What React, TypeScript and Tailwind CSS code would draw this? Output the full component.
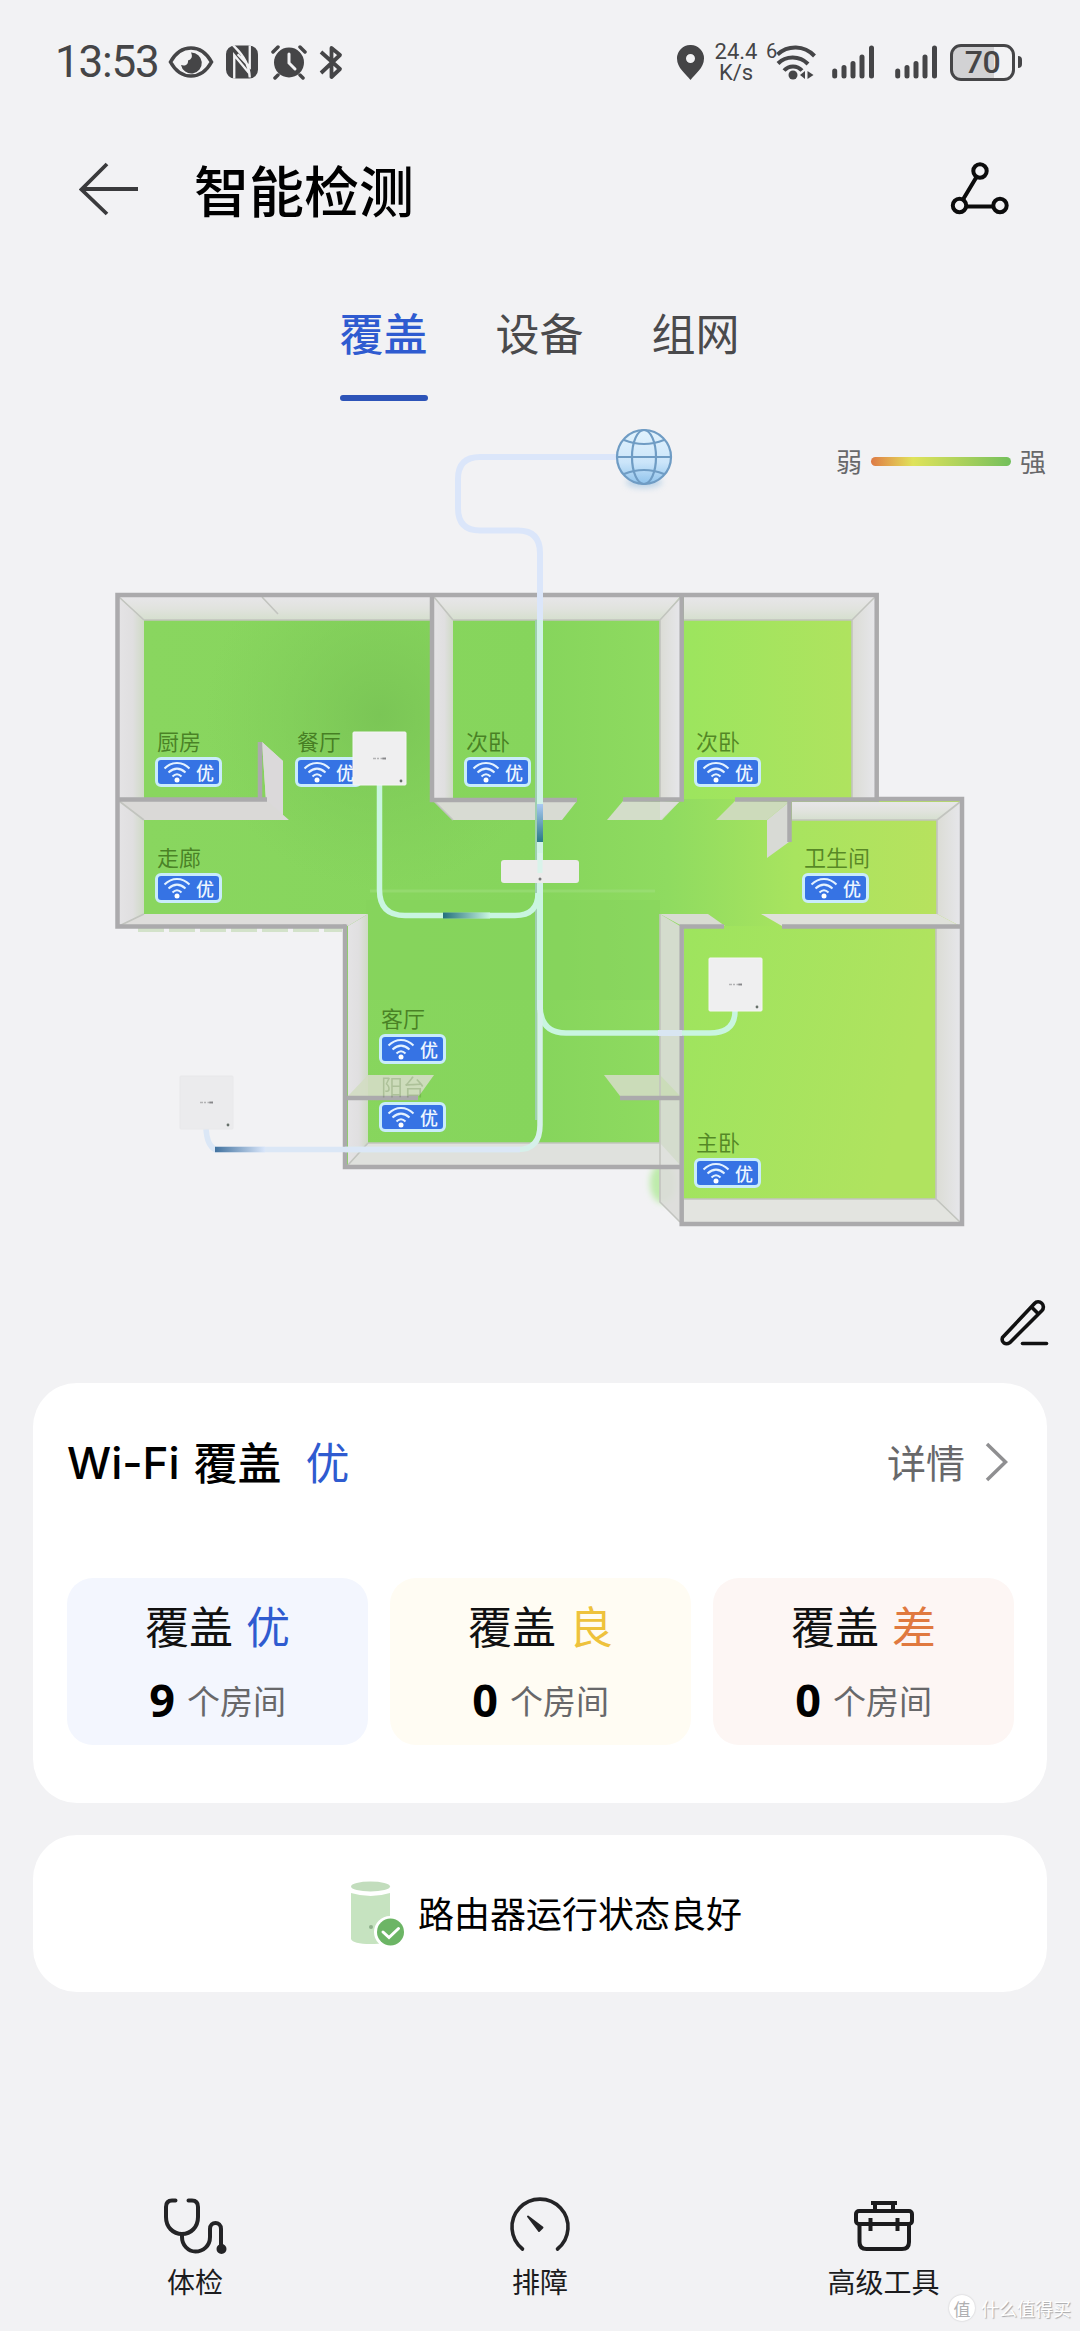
import React from 'react';

interface Room {
  id: string;
  name: string;
  position: string;
  nameClass?: string;
}

interface CoverageLevel {
  grade: string;
  count: number;
  card: string;
  text: string;
}

const rooms: Room[] = [
  { id: 'kitchen', name: '厨房', position: 'left-[155px] top-[314px]' },
  { id: 'dining', name: '餐厅', position: 'left-[295px] top-[314px]' },
  { id: 'bedroom-1', name: '次卧', position: 'left-[464px] top-[314px]' },
  { id: 'bedroom-2', name: '次卧', position: 'left-[694px] top-[314px]' },
  { id: 'corridor', name: '走廊', position: 'left-[155px] top-[430px]' },
  { id: 'bathroom', name: '卫生间', position: 'left-[802px] top-[430px]' },
  { id: 'living', name: '客厅', position: 'left-[379px] top-[591px]' },
  { id: 'balcony', name: '阳台', position: 'left-[379px] top-[659px]', nameClass: 'opacity-30' },
  { id: 'master', name: '主卧', position: 'left-[694px] top-[715px]' },
];

const levels: CoverageLevel[] = [
  { grade: '优', count: 9, card: 'bg-[#f3f6fe]', text: 'text-[#2f5bd0]' },
  { grade: '良', count: 0, card: 'bg-[#fffcf3]', text: 'text-[#eec23c]' },
  { grade: '差', count: 0, card: 'bg-[#fdf6f4]', text: 'text-[#e0793f]' },
];

const SignalBars = () => (
  <svg className="w-[43px] h-[34px]" viewBox="0 0 43 34" stroke="#454547" strokeWidth={5} strokeLinecap="round">
    <path d="M2.7 26v5M12 22.500v8.500M21 18.500v12.500M30 12v19M39.500 3v28" />
  </svg>
);

const StatusBar = () => (
  <div className="flex items-center h-[124px] pl-[55px] pr-[58px] text-[#454547] font-['Roboto',sans-serif]">
    <span className="w-[113px] text-[44px] leading-none tracking-[-1.2px]">13:53</span>
    <svg className="w-[46px] h-[34px]" viewBox="0 0 46 34" fill="none">
      <path d="M2.500 17C8 7 15 3 23 3s15 4 20.500 14C38 27 31 31 23 31S8 27 2.500 17z" stroke="#454547" strokeWidth={3.600} />
      <path d="M23 7.500a10.500 10.500 0 1 1-10 12.500c4 1.500 7.500-.5 7-4.500 3.500-1 5-4 3-8z" fill="#454547" />
    </svg>
    <svg className="w-[32px] h-[34px] ml-[12px]" viewBox="0 0 33 34">
      <rect width="33" height="34" rx="9" fill="#454547" />
      <path d="M7.500 0C9 2 24 13 24.500 33M8.500 34V10l15 18M24.500 0v22L12 9" fill="none" stroke="#f2f2f4" strokeWidth={2.400} />
    </svg>
    <svg className="w-[36px] h-[36px] ml-[13px]" viewBox="0 0 36 36" fill="none" strokeLinecap="round">
      <circle cx="18" cy="18.500" r="15" fill="#454547" />
      <path d="M2 8l5-5M34 8l-5-5M7 31l-3 3M29 31l3 3" stroke="#454547" strokeWidth={3.500} />
      <path d="M18 10v9l6 6" stroke="#f2f2f4" strokeWidth={3} />
    </svg>
    <svg className="w-[24px] h-[35px] ml-[12px]" viewBox="0 0 24 35" fill="none" stroke="#454547" strokeWidth={3.800}>
      <path d="M2 7l19 17-8.500 8V3L21 10 2 28" strokeLinejoin="round" />
    </svg>

    <div className="flex items-center ml-auto">
      <svg className="w-[27px] h-[35px]" viewBox="0 0 27 35">
        <path fillRule="evenodd" fill="#454547" d="M13.500 0A13.300 13.300 0 0 1 27 13.500C27 23 18 29 13.500 35 9 29 0 23 0 13.500A13.300 13.300 0 0 1 13.500 0zm0 9a4.500 4.500 0 1 0 0 9 4.500 4.500 0 0 0 0-9z" />
      </svg>
      <div className="w-[44px] ml-[10px] text-center text-[22px] leading-[21px]">
        <div>24.4</div>
        <div>K/s</div>
      </div>
      <span className="self-start ml-[8px] text-[20px] leading-[20px] w-[11px]">6</span>
      <svg className="w-[40px] h-[35px] -ml-[1px]" viewBox="0 0 40 35" fill="none" stroke="#454547" strokeWidth={4}>
        <path d="M1.500 9.500C12 0 28 0 38.500 11M2 18.500c8-8 21.500-8 30 .5M8 25.500c5-5.500 13-5.500 18 0" />
        <circle cx="17" cy="30" r="4.500" fill="#454547" stroke="none" />
        <path d="M29 26v8l-5-4zM31.500 26v8l6-4z" fill="#454547" stroke="none" />
      </svg>
      <div className="flex gap-[20px] ml-[16px]">
        <SignalBars />
        <SignalBars />
      </div>
      <div className="relative flex items-center justify-center w-[65px] h-[37px] ml-[12px] rounded-[11px] border-[3px] border-[#454547] bg-linear-to-r from-[#d2d2d4] from-70% to-[#f2f2f4] to-70%">
        <span className="text-[32px] leading-none font-medium tracking-[-0.5px]">70</span>
      </div>
      <span className="w-[4px] h-[12px] ml-[3px] rounded-r bg-[#454547]" />
    </div>
  </div>
);

const Header = () => (
  <header className="flex items-center h-[130px] mb-[2px] pl-[79px] pr-[70px]">
    <svg className="w-[60px] h-[54px]" viewBox="0 0 60 54" fill="none" stroke="#3a3a3c" strokeWidth={3.800}>
      <path d="M59 27H3M28 2L2.500 27.500 28 52" />
    </svg>
    <h1 className="ml-[55px] pb-[2px] text-[55px] leading-none font-medium text-black">智能检测</h1>
    <svg className="w-[60px] h-[54px] ml-auto" viewBox="0 0 60 54" fill="none" stroke="#0c0c0c" strokeWidth={4}>
      <circle cx="30" cy="9" r="6.700" />
      <circle cx="9.500" cy="43.500" r="6.700" />
      <circle cx="50" cy="43.500" r="6.700" />
      <path d="M26.500 15L13 37.500M16.500 44.500H43" />
    </svg>
  </header>
);

const Tabs = () => (
  <nav className="flex justify-center gap-[68px] h-[154px] pt-[47px] pr-[1px] text-[44px] leading-[58px] text-[#4a4a4c]">
    <div className="flex flex-col items-center text-[#2f5bd0] font-medium">
      覆盖
      <span className="w-[88px] h-[6px] mt-[34px] rounded-full bg-[#2d54b8]" />
    </div>
    <div>设备</div>
    <div>组网</div>
  </nav>
);

const AccessPoint = ({ x, y, faded }: { x: number; y: number; faded?: boolean }) => (
  <g transform={`translate(${x} ${y})`}>
    <rect width="53" height="53" rx="1" fill={faded ? '#ebebed' : '#efeff0'} stroke={faded ? '#e8e8ea' : '#f5f5f5'} />
    <path d="M20 26.500h13" stroke="#b3b3b5" strokeWidth={1.600} strokeDasharray="3 1 2 1.500" />
    <path d="M29.500 26.500h3.500" stroke="#87878a" strokeWidth={1.800} />
    <circle cx="48" cy="49" r="1.400" fill="#66706a" />
  </g>
);

const FloorPlan = () => (
  <svg className="absolute inset-0 w-full h-full" viewBox="0 410 1080 973" fill="none">
    <defs>
      <linearGradient id="hall" gradientUnits="userSpaceOnUse" x1="144" y1="0" x2="937" y2="0">
        <stop offset="0" stopColor="#89d65f" />
        <stop offset="0.5" stopColor="#86d55c" />
        <stop offset="0.66" stopColor="#8fdb60" />
        <stop offset="0.82" stopColor="#a8e45f" />
        <stop offset="1" stopColor="#b7e25e" />
      </linearGradient>
      <linearGradient id="east" gradientUnits="userSpaceOnUse" x1="684" y1="900" x2="937" y2="960">
        <stop offset="0" stopColor="#9de45e" />
        <stop offset="1" stopColor="#b0e35f" />
      </linearGradient>
      <linearGradient id="bedroom" gradientUnits="userSpaceOnUse" x1="684" y1="0" x2="852" y2="0">
        <stop offset="0" stopColor="#9ce55e" />
        <stop offset="1" stopColor="#afe35f" />
      </linearGradient>
      <radialGradient id="spot" gradientUnits="userSpaceOnUse" cx="380" cy="715" r="175">
        <stop offset="0" stopColor="#79c455" stopOpacity="0.9" />
        <stop offset="1" stopColor="#7fcb59" stopOpacity="0" />
      </radialGradient>
      <linearGradient id="face" x1="0" y1="0" x2="0" y2="1">
        <stop offset="0" stopColor="#e7e6e9" />
        <stop offset="0.5" stopColor="#e1e3de" />
        <stop offset="1" stopColor="#d5dfce" />
      </linearGradient>
      <linearGradient id="faceX" x1="0" y1="0" x2="1" y2="0">
        <stop offset="0" stopColor="#e4e3e5" />
        <stop offset="0.55" stopColor="#e0dfe0" />
        <stop offset="1" stopColor="#cfdac6" />
      </linearGradient>
      <linearGradient id="faceR" x1="0" y1="0" x2="1" y2="0">
        <stop offset="0" stopColor="#dbdcd5" />
        <stop offset="1" stopColor="#e6e6ea" />
      </linearGradient>
      <linearGradient id="pulseDown" gradientUnits="userSpaceOnUse" x1="0" y1="804" x2="0" y2="842">
        <stop offset="0" stopColor="#a9c8f2" />
        <stop offset="1" stopColor="#2a7a86" />
      </linearGradient>
      <linearGradient id="pulseA" gradientUnits="userSpaceOnUse" x1="443" y1="0" x2="490" y2="0">
        <stop offset="0" stopColor="#23707d" />
        <stop offset="1" stopColor="#c9f5e0" />
      </linearGradient>
      <linearGradient id="pulseB" gradientUnits="userSpaceOnUse" x1="215" y1="0" x2="265" y2="0">
        <stop offset="0" stopColor="#41729f" />
        <stop offset="1" stopColor="#d9e6fa" />
      </linearGradient>
      <linearGradient id="globe" x1="0" y1="0" x2="0" y2="1">
        <stop offset="0" stopColor="#e2f3fd" />
        <stop offset="0.6" stopColor="#cbe5fa" />
        <stop offset="1" stopColor="#8fc3ec" />
      </linearGradient>
      <filter id="soft" x="-50%" y="-50%" width="200%" height="200%">
        <feGaussianBlur stdDeviation="3" />
      </filter>
    </defs>

    {/* Signal bleeding past the walls */}
    <ellipse cx="663" cy="1183" rx="13" ry="20" fill="#bdebaa" filter="url(#soft)" />
    <path d="M138 929h204" stroke="#d3e2ca" strokeWidth={6} strokeDasharray="26 5" />

    {/* Floors */}
    <path d="M117 595H876V799H962V926H682V1167H346V926H117z" fill="url(#hall)" />
    <path d="M117 595H432V800H550V926H117z" fill="url(#spot)" />
    <path d="M684 597H874V799H684z" fill="url(#bedroom)" />
    <path d="M684 926H960V1222H684z" fill="url(#east)" />
    <path d="M366 900H660V1000H366z" fill="#85d35c" opacity="0.4" />
    <path d="M370 891h285" stroke="#a7e08a" strokeWidth={3} opacity="0.4" />

    {/* Top wall faces */}
    <path d="M119 597H430V620H144z" fill="url(#face)" />
    <path d="M434 597H680L660 620H453z" fill="url(#face)" />
    <path d="M684 597H875L852 620H684z" fill="url(#face)" />
    <path d="M792 802H960L937 820H792z" fill="url(#face)" />

    {/* Side wall faces */}
    <path d="M119 597l25 23V799H119z" fill="url(#faceX)" />
    <path d="M119 801l25 19v94l-25 12z" fill="url(#faceX)" />
    <path d="M434 597l19 23V800H434z" fill="url(#faceX)" />
    <path d="M660 620l20-22V799H660z" fill="url(#faceR)" />
    <path d="M852 620l23-23V799H852z" fill="url(#faceR)" />
    <path d="M937 820l23-18V926l-23-12z" fill="url(#faceR)" />
    <path d="M936 928h24v294l-24-23z" fill="url(#faceR)" />
    <path d="M348 926l20-12v229l-20 22z" fill="url(#faceX)" />
    <path d="M660 914l20 12v296l-20-20z" fill="#dbdcd9" fillOpacity="0.9" />

    {/* Lower wall faces */}
    <path d="M119 801H266L262 742l21 19v59H144z" fill="#dad9d7" />
    <path d="M262 742l21 19v59h6l-23-20z" fill="#dbd9da" />
    <path d="M434 801H577L562 820H453z" fill="#d8dbd3" />
    <path d="M623 801L607 820H662L679 802z" fill="#d3ddc9" />
    <path d="M660 801L660 820L679 802z" fill="#dddeda" />
    <path d="M735 801L716 820H767L789 802z" fill="#cddbbb" />
    <path d="M789 802L767 820V858L789 842z" fill="#d8dad5" />
    <path d="M119 926l25-12H368l-20 12z" fill="#dedddb" />
    <path d="M761 914H937l23 12H782z" fill="#dfe1da" />
    <path d="M660 914h48l17 12H682z" fill="#d8dcd2" />
    <path d="M348 1165l20-22H660l20 22z" fill="#dfe1dd" />
    <path d="M684 1199H936l24 23H684z" fill="#e3e4e0" />
    <path d="M348 1096l20-21h66l-15 21z" fill="#d2dcc3" fillOpacity="0.92" />
    <path d="M604 1075h56l20 21H620z" fill="#cbdcb9" />

    {/* Creases */}
    <path
      d="M119 597l25 23M262 597l16 17M434 597l19 23M680 598l-20 22V799M875 597l-23 23V799M119 801l25 19M434 801l19 19M960 802l-23 18v94M119 926l25-12M348 1165l20-22M960 1222l-24-23V928M680 1222l-20-20V914M144 620H430M453 620H660M684 620H852M792 820H937M684 1199H936M368 1143H660"
      stroke="#c2c4bf"
      strokeWidth={1.600}
    />

    {/* Wall tops */}
    <g stroke="#abaaac" strokeWidth={4.500}>
      <path d="M346 926.500H117.500V595H876.700V799H962V1224H681.700V926.500H724" />
      <path d="M345 924.500V1167H681" />
      <path d="M432 595V800H577M681.700 595V799.500H623M735 799.500H879M117 799.500H267M260 742v58" />
      <path d="M789.500 799V842M782 926.500H962M346 1098H418M620 1098H681" />
    </g>

    {/* Uplink to the internet */}
    <path d="M618 457H480Q458 457 458 479V508Q458 530.500 480 530.500H518Q540 530.500 540 553V622" stroke="#dbe6fa" strokeWidth={6} />
    <path d="M540 620V1010" stroke="#cff2e6" strokeWidth={6} />
    <path d="M536 620V1120" stroke="#9fcfb0" strokeWidth={2} />
    <path d="M540 804V842" stroke="url(#pulseDown)" strokeWidth={6} />

    {/* Links to the access points */}
    <path d="M379.500 785V890Q379.500 915.500 405 915.500H515Q538 915.500 538 893" stroke="#c9f5e0" strokeWidth={5.500} />
    <path d="M443 915.500H490" stroke="url(#pulseA)" strokeWidth={6} />
    <path d="M540 900V1005Q540 1033 566 1033H710Q735 1033 735 1011" stroke="#c9f5e0" strokeWidth={5.500} />
    <path d="M658 1033H682" stroke="#d9e6f2" strokeWidth={6} />
    <path d="M540 1000V1125Q540 1149.500 518 1149.500H345" stroke="#d6f0ea" strokeWidth={5.500} />
    <path d="M520 1149.500H215Q207 1145 206 1129" stroke="#dbe7f6" strokeWidth={5.500} />
    <path d="M215 1149.500H265" stroke="url(#pulseB)" strokeWidth={5.500} />

    {/* Main router */}
    <rect x="501" y="860" width="78" height="23" rx="3" fill="#ecebeb" />
    <path d="M540 853V873" stroke="#d9f3ea" strokeWidth={5} />
    <circle cx="540" cy="879" r="1.500" fill="#777" />

    {/* Globe */}
    <ellipse cx="644" cy="482" rx="18" ry="6" fill="#8db9dd" opacity="0.55" filter="url(#soft)" />
    <circle cx="644" cy="457" r="27" fill="url(#globe)" />
    <g stroke="#6f9cc4" strokeWidth={2.200}>
      <circle cx="644" cy="457" r="27" />
      <ellipse cx="644" cy="457" rx="12" ry="27" />
      <path d="M617 457h54M624 440q20 8 40 0M624 474q20-8 40 0" />
    </g>
  </svg>
);

const CoverageBadge = () => (
  <div className="flex items-center justify-center gap-[5px] w-[67px] h-[30px] rounded-[6px] border-[3px] border-[#c9ecfb] bg-[#3673e4]">
    <svg className="w-[28px] h-[22px]" viewBox="0 0 28 22" fill="none" stroke="#e4f2ff" strokeWidth={2}>
      <path d="M1.500 7.500c7.500-7.500 17.500-7.500 25 0M5.500 11.500c5.500-5 11.500-5 17 0M9.500 15.500c3-3 6-3 9 0" />
      <circle cx="14" cy="19" r="2.500" fill="#fff" stroke="none" />
    </svg>
    <span className="pb-[1px] text-[18px] leading-none font-medium text-[#eef6ff]">优</span>
  </div>
);

const RoomPin = ({ room }: { room: Room }) => (
  <div className={`absolute ${room.position}`}>
    <div className={`pl-[2px] mb-[1px] text-[22px] leading-[32px] text-[#1f4a00]/60 ${room.nameClass ?? ''}`}>{room.name}</div>
    <CoverageBadge />
  </div>
);

const CoverageMap = () => (
  <section className="relative flex flex-col justify-between h-[973px] pt-[32px] pb-[37px] pr-[31px]">
    <FloorPlan />
    {rooms.map((room) => (
      <RoomPin key={room.id} room={room} />
    ))}
    {/* Access points sit over the room badges */}
    <svg className="absolute inset-0 w-full h-full" viewBox="0 410 1080 973">
      <AccessPoint x={353} y={732} />
      <AccessPoint x={709} y={958} />
      <AccessPoint x={180} y={1076} faded />
    </svg>
    <div className="flex items-center justify-end gap-[9px] pr-[3px] text-[26px] leading-[37px] text-[#68686a]">
      <span>弱</span>
      <span className="w-[140px] h-[9px] mt-[2px] rounded-full bg-linear-to-r from-[#dd7a45] via-[#dfe35a] via-30% to-[#72bf5b]" />
      <span>强</span>
    </div>
    <svg className="self-end w-[50px] h-[48px]" viewBox="0 0 50 48" fill="none" stroke="#111" strokeWidth={3.600} strokeLinecap="round" strokeLinejoin="round">
      <path d="M3.500 39.500L35.500 5.500a5 5 0 0 1 7.500 7L11 44.500c-4.500 3-9 0-7.500-5zM32.500 9l7 7" />
      <path d="M23.500 45.500H47.500" />
    </svg>
  </section>
);

const CoverageCard = () => (
  <section className="h-[420px] mx-[33px] pl-[34px] pr-[33px] rounded-[44px] bg-white">
    <div className="flex items-center h-[156px]">
      <h2 className="flex items-center text-[44px] leading-none font-medium text-black">
        <span className="pt-[3px] font-['Inter',sans-serif] text-[44px] font-medium">Wi-Fi</span>
        <span className="ml-[14px]">覆盖</span>
      </h2>
      <span className="ml-[24px] text-[44px] leading-none text-[#2f5bd0]">优</span>
      <span className="ml-auto text-[39px] leading-none text-[#68686a]">详情</span>
      <svg className="w-[24px] h-[40px] mt-[2px] ml-[20px] mr-[5px]" viewBox="0 0 24 40" fill="none" stroke="#8f8f91" strokeWidth={3.500}>
        <path d="M2 2l18.500 18L2 38" />
      </svg>
    </div>
    <div className="grid grid-cols-3 gap-[22px] mt-[39px]">
      {levels.map((level) => (
        <div key={level.grade} className={`flex flex-col items-center h-[167px] pt-[24px] rounded-[26px] ${level.card}`}>
          <div className="flex gap-[13px] text-[44px] leading-[46px] text-[#111]">
            <span>覆盖</span>
            <span className={level.text}>{level.grade}</span>
          </div>
          <div className="flex items-center gap-[12px] mt-[28px] leading-[48px]">
            <span className="w-[26px] text-center font-['Open_Sans',sans-serif] text-[45px] font-bold text-black">{level.count}</span>
            <span className="text-[33px] text-[#68686a]">个房间</span>
          </div>
        </div>
      ))}
    </div>
  </section>
);

const RouterStatus = () => (
  <section className="flex items-center h-[157px] mt-[32px] mx-[33px] pl-[318px] rounded-[44px] bg-white">
    <svg className="w-[56px] h-[68px] mt-[2px]" viewBox="0 0 56 68">
      <path d="M0 12q20 6 39 0v46q-2 5-19.500 5T0 58z" fill="#c6e3c0" />
      <ellipse cx="19.500" cy="5.500" rx="19.500" ry="5" fill="#c2ddbd" />
      <circle cx="20" cy="46" r="2" fill="#8fb08b" />
      <circle cx="39" cy="51" r="16" fill="#fff" />
      <circle cx="39.500" cy="51" r="13.500" fill="#6cb565" />
      <path d="M32 51l6 5.500 9.500-9" fill="none" stroke="#fff" strokeWidth={3} strokeLinecap="round" />
    </svg>
    <span className="ml-[11px] pb-[4px] text-[36px] leading-none text-black">路由器运行状态良好</span>
  </section>
);

const BottomNav = () => (
  <nav className="flex justify-between h-[135px] mt-auto px-[95px] text-[28px] leading-[40px] text-[#1c1c1e]">
    <div className="flex flex-col items-center w-[200px]">
      <svg className="w-[64px] h-[60px]" viewBox="0 0 64 60" fill="none" stroke="#242426" strokeWidth={4} strokeLinecap="round">
        <path d="M12.500 4.500H9Q3 4.500 3 11V21C3 31 10 38 19 38S35 31 35 21V11Q35 4.500 29 4.500H25.500" />
        <path d="M19 38v3c0 8 6 14.500 13.500 14.500S47 50 47 41V33c0-8 11-8 11 0V52" />
        <circle cx="58.500" cy="53" r="3" fill="#242426" />
      </svg>
      <span className="mt-[5px]">体检</span>
    </div>
    <div className="flex flex-col items-center w-[200px]">
      <svg className="w-[64px] h-[60px]" viewBox="0 0 64 60" fill="none" stroke="#242426" strokeWidth={3.600} strokeLinecap="round">
        <path d="M14.500 53a28 28 0 1 1 35 0" />
        <path d="M20 20.500L34.500 31.500 31 35z" fill="#242426" strokeWidth={2} strokeLinejoin="round" />
      </svg>
      <span className="mt-[5px]">排障</span>
    </div>
    <div className="flex flex-col items-center w-[200px] pr-[3px]">
      <svg className="w-[64px] h-[60px]" viewBox="0 0 64 60" fill="none" stroke="#1c1c1e" strokeWidth={4}>
        <path d="M19 7H45M23 7v8M41 7v8" />
        <rect x="4" y="15" width="56" height="13" rx="3" />
        <path d="M7.500 28V46q0 7 7 7H50q7 0 7-7V28M18.500 22v13M45.500 22v13" />
      </svg>
      <span className="mt-[5px]">高级工具</span>
    </div>
  </nav>
);

const Watermark = () => (
  <div className="absolute right-[9px] bottom-[10px] flex items-center gap-[6px]">
    <span className="flex items-center justify-center w-[26px] h-[26px] rounded-full bg-white text-[17px] leading-none text-[#b0b0b2] shadow-[0_0_2px_rgba(0,0,0,0.2)]">值</span>
    <span className="text-[18px] leading-none text-white [text-shadow:1px_1px_1px_#a5a5a7]">什么值得买</span>
  </div>
);

export default function App() {
  return (
    <div className="relative flex flex-col w-[1080px] h-[2331px] overflow-hidden bg-[#f2f2f4] font-['Noto_Sans_CJK_SC',sans-serif]">
      <StatusBar />
      <Header />
      <Tabs />
      <CoverageMap />
      <CoverageCard />
      <RouterStatus />
      <BottomNav />
      <Watermark />
    </div>
  );
}
